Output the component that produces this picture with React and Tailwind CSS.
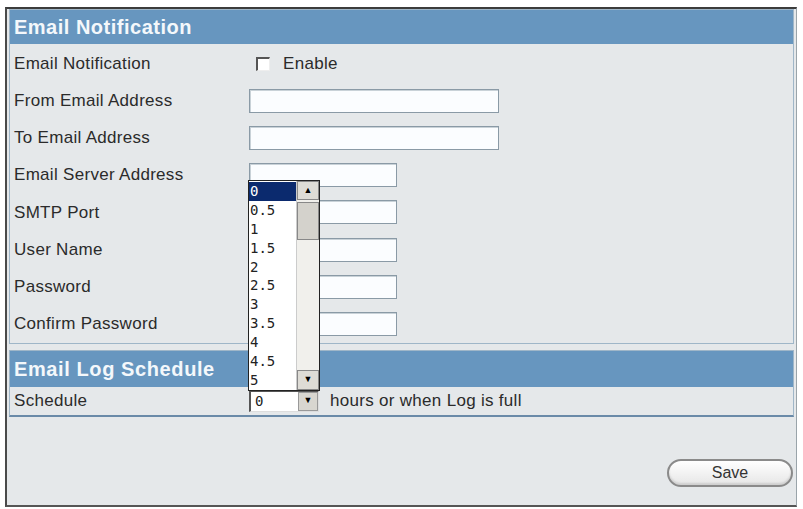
import React from "react";

const font = { fontFamily: '"Liberation Sans", Arial, sans-serif' };

function Row({ label, children }) {
  return (
    <div className="flex h-[37.2px] items-center">
      <div className="w-[239px] pl-[4px] text-[17px] tracking-[0.3px] text-[#2b2b2b]">{label}</div>
      <div className="flex items-center">{children}</div>
    </div>
  );
}

function TextBox({ w }) {
  return (
    <div
      className="h-[24px] border border-[#8a9aa6] bg-[#fbfdff] shadow-[inset_1px_1px_0_#c9d2d8]"
      style={{ width: w }}
    />
  );
}

const options = ["0", "0.5", "1", "1.5", "2", "2.5", "3", "3.5", "4", "4.5", "5"];

export default function App() {
  return (
    <div className="relative h-[509px] w-[803px] bg-white" style={font}>
      <div className="absolute left-[5px] top-[7px] h-[500px] w-[792px] border-l-2 border-t-2 border-b-2 border-r border-l-[#4a4a4a] border-t-[#3c3c3c] border-b-[#555] border-r-[#9aa4aa] bg-[#e5e8ea]">
        <div className="flex h-full flex-col px-[1px]">
          {/* Section 1 */}
          <div className="mx-[1px] border border-[#9fb6c8]">
            <div className="flex h-[34px] items-center bg-[#6796bf] pl-[4px] text-[20px] font-bold tracking-[0.5px] text-[#f4f8fb]">
              Email Notification
            </div>
            <div className="pt-[1px]">
              <Row label="Email Notification">
                <div className="ml-[7px] h-[14px] w-[14px] border-l-2 border-t-2 border-[#555] border-r border-b border-r-[#eee] border-b-[#eee] bg-white" />
                <span className="ml-[13px] text-[17px] tracking-[0.3px] text-[#2b2b2b]">Enable</span>
              </Row>
              <Row label="From Email Address"><TextBox w={250} /></Row>
              <Row label="To Email Address"><TextBox w={250} /></Row>
              <Row label="Email Server Address"><TextBox w={148} /></Row>
              <Row label="SMTP Port"><TextBox w={148} /></Row>
              <Row label="User Name"><TextBox w={148} /></Row>
              <Row label="Password"><TextBox w={148} /></Row>
              <Row label="Confirm Password"><TextBox w={148} /></Row>
            </div>
          </div>
          {/* Section 2 */}
          <div className="mx-[1px] mt-[6px] border border-[#9fb6c8] border-b-2 border-b-[#6a8aa8]">
            <div className="flex h-[36px] items-center bg-[#6796bf] pl-[4px] text-[20px] font-bold tracking-[0.6px] text-[#f4f8fb]">
              Email Log Schedule
            </div>
            <div className="flex h-[28px] items-center">
              <div className="w-[239px] pl-[4px] text-[17px] tracking-[0.3px] text-[#2b2b2b]">Schedule</div>
              <div className="flex h-[22px] w-[70px] items-center border-l-2 border-t-2 border-[#555] border-r border-b border-r-[#ddd] border-b-[#ddd] bg-white">
                <span className="ml-[4px] flex-1 text-[14px] text-[#222]" style={{ fontFamily: '"DejaVu Sans Mono", monospace' }}>0</span>
                <div className="flex h-full w-[20px] items-center justify-center border border-[#999] bg-[#d8d6d0] text-[9px] text-black">▼</div>
              </div>
              <span className="ml-[11px] text-[17px] tracking-[0.3px] text-[#2b2b2b]">hours or when Log is full</span>
            </div>
          </div>
          <div className="flex flex-1 items-start justify-end pr-[2px] pt-[42px]">
            <button className="flex h-[28px] w-[126px] items-center justify-center rounded-full border-2 border-[#8a8a8a] bg-gradient-to-b from-white to-[#e6e6e6] text-[16px] text-[#333] shadow-[inset_0_-2px_2px_#cfcfcf]">
              Save
            </button>
          </div>
        </div>
      </div>

      {/* Open dropdown list */}
      <div className="absolute left-[248px] top-[180px] flex h-[211px] w-[72px] border border-[#222] bg-white">
        <div className="flex-1 pt-[1px]" style={{ fontFamily: '"DejaVu Sans Mono", monospace' }}>
          {options.map((o, i) => (
            <div
              key={o}
              className={
                "h-[18.9px] pl-[1px] text-[14px] leading-[18px] " +
                (i === 0 ? "bg-[#0b2a6e] text-white" : "text-[#222]")
              }
            >
              {o}
            </div>
          ))}
        </div>
        <div className="flex w-[23px] flex-col border-l border-[#ccc] bg-[#f1f0ec]">
          <div className="flex h-[19px] items-center justify-center border border-[#888] bg-[#dedcd6] text-[9px] text-black">▲</div>
          <div className="mt-[2px] h-[38px] border border-[#888] bg-[#d4d2cc]" />
          <div className="flex-1" />
          <div className="flex h-[20px] items-center justify-center border border-[#888] bg-[#dedcd6] text-[9px] text-black">▼</div>
        </div>
      </div>
    </div>
  );
}
